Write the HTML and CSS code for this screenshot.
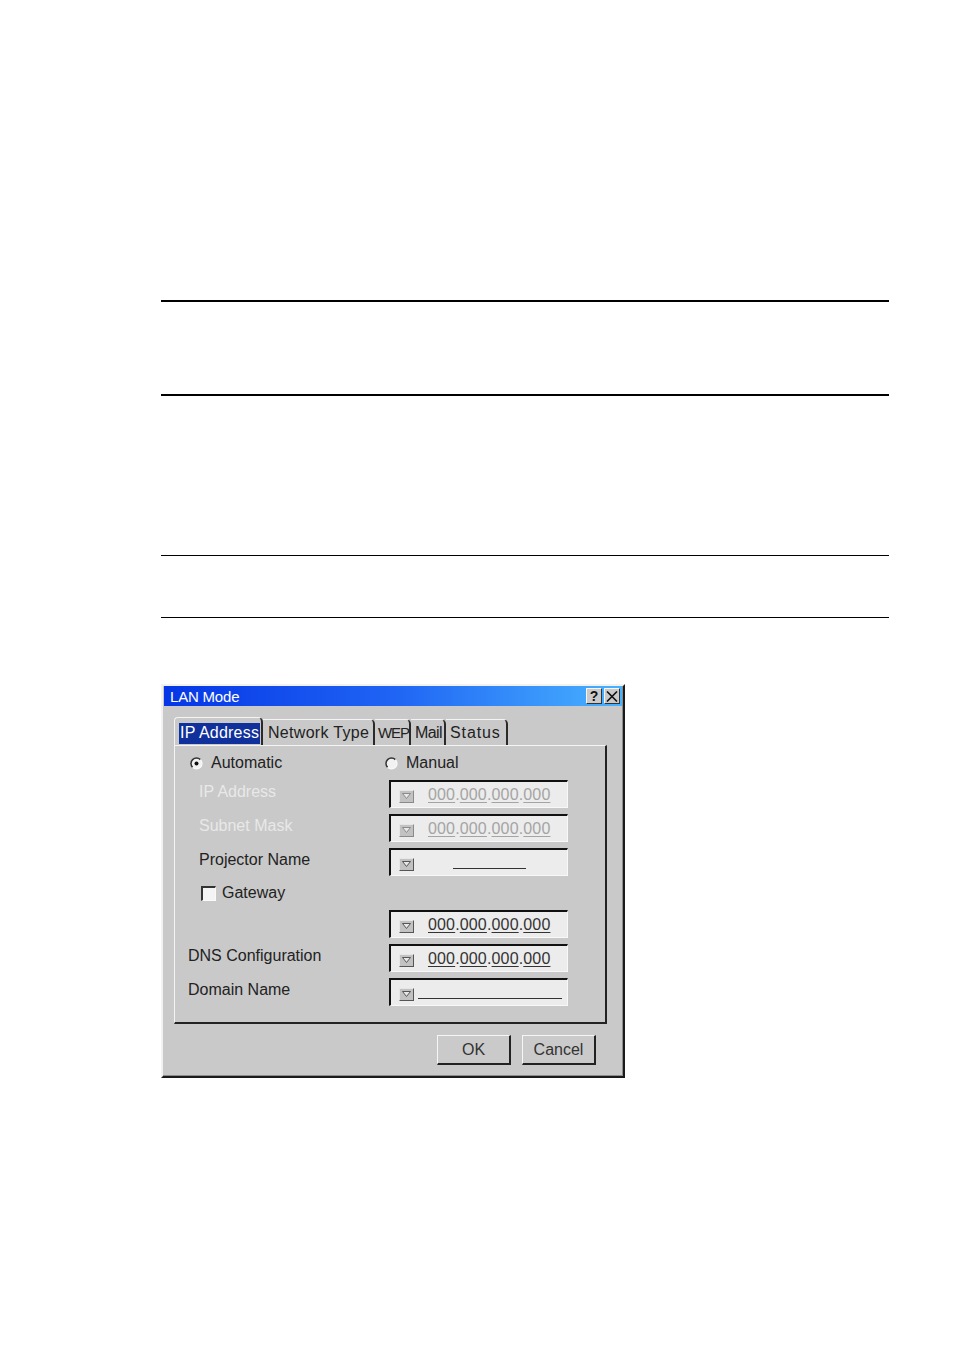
FILE: index.html
```html
<!DOCTYPE html>
<html>
<head>
<meta charset="utf-8">
<title>LAN Mode</title>
<link rel="stylesheet" href="styles.css">
</head>
<body>
<div class="page">
  <div class="rule thick r1"></div>
  <div class="rule thick r2"></div>
  <div class="rule thin r3"></div>
  <div class="rule thin r4"></div>

  <div class="dialog">
    <div class="titlebar">
      <span class="title">LAN Mode</span>
      <div class="tbtns">
        <span class="tbtn help">?</span>
        <span class="tbtn close"><svg width="12" height="11" viewBox="0 0 12 11"><path d="M1 0.5 L11 10.5 M11 0.5 L1 10.5" stroke="#111" stroke-width="1.6" fill="none"/></svg></span>
      </div>
    </div>

    <div class="tabs">
      <div class="tab tab-ip active"><span class="sel">IP Address</span></div>
      <div class="tab tab-net">Network Type</div>
      <div class="tab tab-wep">WEP</div>
      <div class="tab tab-mail">Mail</div>
      <div class="tab tab-status">Status</div>
    </div>

    <div class="panel">
      <div class="cell opt ind2">
        <svg class="radio" width="13" height="13" viewBox="0 0 13 13"><circle cx="6.5" cy="6.5" r="5.5" fill="#f2f2f2"/><path d="M2.6 10.4 A5.5 5.5 0 0 1 10.4 2.6" stroke="#333" stroke-width="1.5" fill="none"/><path d="M10.4 2.6 A5.5 5.5 0 0 1 2.6 10.4" stroke="#fafafa" stroke-width="1.2" fill="none"/><circle cx="6.5" cy="6.5" r="2" fill="#111"/></svg>
        <span class="lbl">Automatic</span>
      </div>
      <div class="cell opt manual">
        <svg class="radio" width="13" height="13" viewBox="0 0 13 13"><circle cx="6.5" cy="6.5" r="5.5" fill="#f2f2f2"/><path d="M2.6 10.4 A5.5 5.5 0 0 1 10.4 2.6" stroke="#333" stroke-width="1.5" fill="none"/><path d="M10.4 2.6 A5.5 5.5 0 0 1 2.6 10.4" stroke="#fafafa" stroke-width="1.2" fill="none"/></svg>
        <span class="lbl">Manual</span>
      </div>

      <div class="cell lift ind11 disabled">IP Address</div>
      <div class="field">
        <span class="dd dim"><svg width="9" height="6" viewBox="0 0 9 6"><path d="M0.5 0.5 H8.5 L4.5 5.5 Z" fill="#e8e8e8" stroke="#8a8a8a" stroke-width="1"/></svg></span>
        <span class="ip dimtext"><u>000</u>.<u>000</u>.<u>000</u>.<u>000</u></span>
      </div>

      <div class="cell lift ind11 disabled">Subnet Mask</div>
      <div class="field">
        <span class="dd dim"><svg width="9" height="6" viewBox="0 0 9 6"><path d="M0.5 0.5 H8.5 L4.5 5.5 Z" fill="#e8e8e8" stroke="#8a8a8a" stroke-width="1"/></svg></span>
        <span class="ip dimtext"><u>000</u>.<u>000</u>.<u>000</u>.<u>000</u></span>
      </div>

      <div class="cell lift ind11">Projector Name</div>
      <div class="field">
        <span class="dd"><svg width="9" height="6" viewBox="0 0 9 6"><path d="M0.5 0.5 H8.5 L4.5 5.5 Z" fill="#e8e8e8" stroke="#555" stroke-width="1"/></svg></span>
        <span class="blank short"></span>
      </div>

      <div class="cell ind13 chkrow">
        <span class="check"></span>
        <span class="lbl">Gateway</span>
      </div>
      <div class="cell"></div>

      <div class="cell"></div>
      <div class="field">
        <span class="dd"><svg width="9" height="6" viewBox="0 0 9 6"><path d="M0.5 0.5 H8.5 L4.5 5.5 Z" fill="#e8e8e8" stroke="#555" stroke-width="1"/></svg></span>
        <span class="ip"><u>000</u>.<u>000</u>.<u>000</u>.<u>000</u></span>
      </div>

      <div class="cell lift">DNS Configuration</div>
      <div class="field">
        <span class="dd"><svg width="9" height="6" viewBox="0 0 9 6"><path d="M0.5 0.5 H8.5 L4.5 5.5 Z" fill="#e8e8e8" stroke="#555" stroke-width="1"/></svg></span>
        <span class="ip"><u>000</u>.<u>000</u>.<u>000</u>.<u>000</u></span>
      </div>

      <div class="cell lift">Domain Name</div>
      <div class="field">
        <span class="dd"><svg width="9" height="6" viewBox="0 0 9 6"><path d="M0.5 0.5 H8.5 L4.5 5.5 Z" fill="#e8e8e8" stroke="#555" stroke-width="1"/></svg></span>
        <span class="blank long"></span>
      </div>
    </div>

    <div class="buttons">
      <div class="btn">OK</div>
      <div class="btn">Cancel</div>
    </div>
  </div>
</div>
</body>
</html>
```

FILE: styles.css
```css
html, body {
  margin: 0;
  padding: 0;
  background: #ffffff;
}

.page {
  padding: 300px 0 0 161px;
  width: 728px;
  font-family: "Liberation Sans", Arial, sans-serif;
}

.rule {
  width: 728px;
  background: #000;
}
.rule.thick { height: 2px; }
.rule.thin { height: 1px; }
.r2 { margin-top: 92px; }
.r3 { margin-top: 159px; }
.r4 { margin-top: 61px; }

.dialog {
  margin-top: 66px;
  width: 464px;
  height: 394px;
  box-sizing: border-box;
  background: #c9c9c9;
  border-top: 2px solid #f2f2f2;
  border-left: 2px solid #f2f2f2;
  border-right: 2px solid #1a1a1a;
  border-bottom: 2px solid #1a1a1a;
  box-shadow: inset -1px -1px 0 #8c8c8c;
  padding: 0 1px 11px 1px;
  display: flex;
  flex-direction: column;
  font-size: 16px;
  color: #222;
}

.titlebar {
  height: 20px;
  background: linear-gradient(to right, #0636e6 0%, #1f64f4 50%, #48b2ff 100%);
  display: flex;
  align-items: center;
  justify-content: space-between;
  padding: 0 2px 0 6px;
}
.title {
  color: #ffffff;
  font-size: 15px;
  letter-spacing: -0.2px;
}
.tbtns {
  display: flex;
  gap: 2px;
}
.tbtn {
  width: 16px;
  height: 16px;
  box-sizing: border-box;
  background: #cacaca;
  border-top: 1px solid #f5f5f5;
  border-left: 1px solid #f5f5f5;
  border-right: 1px solid #333;
  border-bottom: 1px solid #333;
  display: flex;
  align-items: center;
  justify-content: center;
  font-size: 14px;
  font-weight: bold;
  line-height: 1;
  color: #111;
}

.tabs {
  margin: 11px 0 0 10px;
  height: 28px;
  display: flex;
  align-items: flex-end;
}
.tab {
  height: 26px;
  box-sizing: border-box;
  border-top: 1px solid #f4f4f4;
  border-right: 2px solid #2a2a2a;
  border-top-right-radius: 5px;
  display: flex;
  align-items: center;
  justify-content: flex-start;
  padding-left: 4px;
  white-space: nowrap;
  font-size: 16px;
  color: #222;
}
.tab-ip {
  width: 89px;
  height: 28px;
  border-left: 1px solid #f4f4f4;
  border-top-left-radius: 4px;
  padding-left: 4px;
  padding-top: 4px;
}
.tab-net { width: 112px; padding-left: 5px; letter-spacing: 0.3px; }
.tab-wep { width: 36px; padding-left: 3px; font-size: 15px; letter-spacing: -1.1px; }
.tab-mail { width: 35px; padding-left: 4px; letter-spacing: -0.6px; }
.tab-status { width: 62px; padding-left: 4px; letter-spacing: 0.9px; }
.sel {
  background: #10309c;
  color: #ffffff;
  padding: 1px 1px 2px 1px;
  letter-spacing: 0.2px;
}

.panel {
  width: 433px;
  height: 279px;
  box-sizing: border-box;
  margin-left: 10px;
  border-top: 1px solid #f4f4f4;
  border-left: 1px solid #f4f4f4;
  border-right: 2px solid #222;
  border-bottom: 2px solid #222;
  padding: 6px 0 0 13px;
  display: grid;
  grid-template-columns: 201px 179px;
  grid-template-rows: 22px 28px 28px 28px 22px 28px 28px 28px;
  row-gap: 6px;
}

.cell {
  display: flex;
  align-items: center;
  white-space: nowrap;
  color: #222;
  font-size: 16px;
}
.lift { padding-bottom: 5px; }
.ind2 { padding-left: 2px; }
.ind11 { padding-left: 11px; }
.ind13 { padding-left: 13px; }
.disabled { color: #e8e8e8; }

.opt { gap: 8px; }
.manual { margin-left: -4px; gap: 8px; }
.radio { flex: none; }

.chkrow { gap: 6px; }
.check {
  width: 15px;
  height: 15px;
  box-sizing: border-box;
  background: #f4f4f4;
  border-top: 2px solid #333;
  border-left: 2px solid #333;
  border-right: 1px solid #fafafa;
  border-bottom: 1px solid #fafafa;
}

.field {
  box-sizing: border-box;
  height: 28px;
  background: #ececec;
  border-top: 2px solid #111;
  border-left: 2px solid #111;
  border-right: 1px solid #f8f8f8;
  border-bottom: 1px solid #f8f8f8;
  display: flex;
  align-items: center;
  padding-left: 8px;
}
.dd {
  flex: none;
  width: 15px;
  height: 13px;
  box-sizing: border-box;
  margin-top: 3px;
  background: #c2c2c2;
  border-top: 1px solid #e6e6e6;
  border-left: 1px solid #e6e6e6;
  border-right: 1px solid #555;
  border-bottom: 1px solid #555;
  display: flex;
  align-items: center;
  justify-content: center;
}
.dd.dim {
  border-right-color: #8a8a8a;
  border-bottom-color: #8a8a8a;
}
.ip {
  margin-left: 14px;
  font-size: 16px;
  color: #333;
  letter-spacing: 0.15px;
}
.ip u {
  text-decoration: underline;
  text-underline-offset: 2px;
  text-decoration-thickness: 1px;
}
.dimtext { color: #a4a4a4; }

.blank {
  display: block;
  height: 12px;
  border-bottom: 1px solid #333;
}
.blank.short { width: 73px; margin-left: 39px; }
.blank.long { width: 144px; margin-left: 4px; }

.buttons {
  margin-top: 11px;
  display: flex;
  justify-content: flex-end;
  gap: 11px;
  padding-right: 26px;
}
.btn {
  width: 74px;
  height: 30px;
  box-sizing: border-box;
  background: #cacaca;
  border-top: 1px solid #f6f6f6;
  border-left: 1px solid #f6f6f6;
  border-right: 2px solid #222;
  border-bottom: 2px solid #222;
  display: flex;
  align-items: center;
  justify-content: center;
  font-size: 16px;
  color: #333;
}
```
